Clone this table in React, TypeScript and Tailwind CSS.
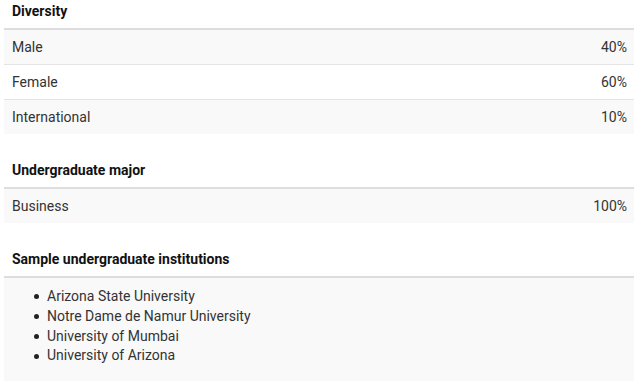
const diversity = [
  { label: "Male", value: "40%" },
  { label: "Female", value: "60%" },
  { label: "International", value: "10%" },
];

const majors = [{ label: "Business", value: "100%" }];

const schools = [
  "Arizona State University",
  "Notre Dame de Namur University",
  "University of Mumbai",
  "University of Arizona",
];

function Header({ title }: { title: string }) {
  return (
    <div className="px-2 pt-[7px] pb-[7px] border-b-2 border-[#dddddd] font-bold text-[#111] leading-5">
      {title}
    </div>
  );
}

function StatTable({ title, rows }: { title: string; rows: { label: string; value: string }[] }) {
  return (
    <div className="mb-[19px]">
      <Header title={title} />
      {rows.map((r, i) => (
        <div
          key={r.label}
          className={`flex justify-between pl-2 pr-[7px] py-[7px] leading-5 ${i > 0 ? "border-t border-[#e4e4e4]" : ""} ${
            i % 2 === 0 ? "bg-[#f9f9f9]" : "bg-white"
          }`}
        >
          <span>{r.label}</span>
          <span>{r.value}</span>
        </div>
      ))}
    </div>
  );
}

export default function App() {
  return (
    <div
      className="w-[640px] h-[381px] overflow-hidden bg-white text-[14px] text-[#333]"
      style={{ fontFamily: "Roboto, 'Liberation Sans', sans-serif" }}
    >
      <div className="-mt-[6px] pl-[4px] pr-[6px]">
        <StatTable title="Diversity" rows={diversity} />
        <StatTable title="Undergraduate major" rows={majors} />
        <div>
          <Header title="Sample undergraduate institutions" />
          <div className="bg-[#f9f9f9] px-2 pt-[9px] pb-5">
            <ul className="pl-[22px] leading-[19.8px]">
              {schools.map((s) => (
                <li key={s} className="flex items-center">
                  <span className="w-[5px] h-[5px] rounded-full bg-[#222] mr-[8px]" />
                  {s}
                </li>
              ))}
            </ul>
          </div>
        </div>
      </div>
    </div>
  );
}
